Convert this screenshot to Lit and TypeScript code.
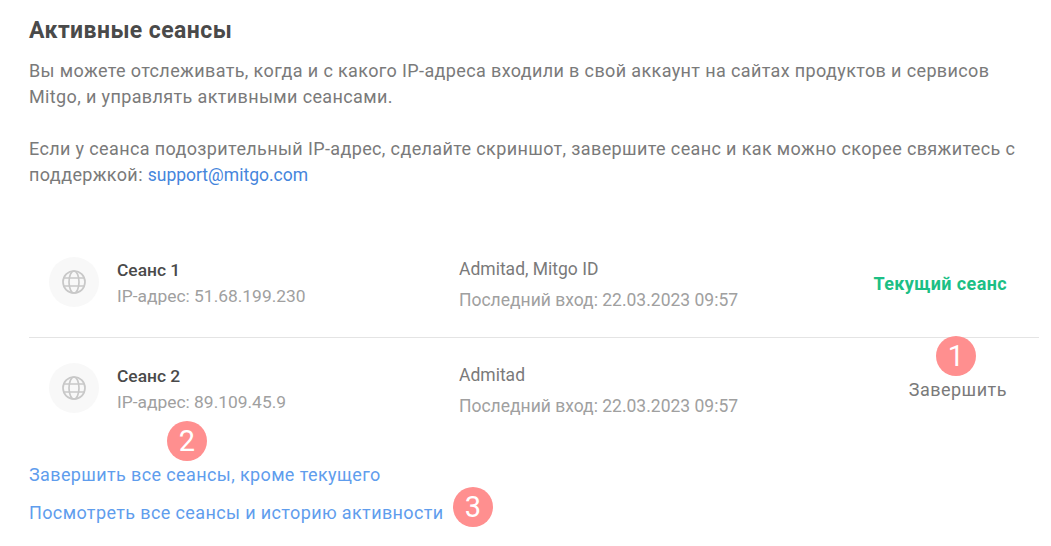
import { LitElement, css, html } from 'lit'
import { customElement } from 'lit/decorators.js'

interface Session {
  name: string
  ip: string
  services: string
  lastLogin: string
  current: boolean
}

const sessions: Session[] = [
  { name: 'Сеанс 1', ip: '51.68.199.230', services: 'Admitad, Mitgo ID', lastLogin: '22.03.2023 09:57', current: true },
  { name: 'Сеанс 2', ip: '89.109.45.9', services: 'Admitad', lastLogin: '22.03.2023 09:57', current: false },
]

const globe = html`
  <svg width="24" height="24" viewBox="0 0 24 24" fill="none" stroke="#c8c8c8" stroke-width="1.7">
    <circle cx="12" cy="12" r="11"></circle>
    <ellipse cx="12" cy="12" rx="5" ry="11"></ellipse>
    <path d="M2 8h20M2 16h20"></path>
  </svg>
`

@customElement('app-root')
export class AppRoot extends LitElement {
  static styles = css`
    :host {
      display: block;
      position: relative;
      width: 1051px;
      height: 546px;
      overflow: hidden;
      background: #fff;
      font-family: Roboto, sans-serif;
      color: #7a7a7a;
    }

    .page {
      padding: 16px 12px 0 29px;
    }

    h1 {
      margin: 0 0 12px;
      font-size: 23px;
      line-height: 30px;
      font-weight: 700;
      letter-spacing: 0.43px;
      color: #4a4a4a;
    }

    p {
      margin: 0 0 26px;
      font-size: 18px;
      line-height: 26px;
      letter-spacing: 0.37px;
    }

    p a {
      font-size: 17.5px;
      letter-spacing: 0;
      color: #4585dc;
      text-decoration: none;
    }

    .sessions {
      margin-top: 44px;
    }

    .row {
      display: flex;
      align-items: center;
      height: 105px;
      padding: 25px 0 30px 20px;
      box-sizing: border-box;
    }

    .row + .row {
      height: 106px;
      border-top: 1px solid #e4e4e4;
    }

    .avatar {
      display: flex;
      align-items: center;
      justify-content: center;
      flex: none;
      width: 50px;
      height: 50px;
      border-radius: 50%;
      background: #f8f8f8;
      margin-right: 18px;
    }

    .info {
      width: 342px;
      flex: none;
      margin-top: 2px;
    }

    .title {
      font-size: 17.4px;
      line-height: 26px;
      font-weight: 500;
      color: #4a4a4a;
    }

    .muted {
      font-size: 17.4px;
      line-height: 26px;
      color: #a0a0a0;
    }

    .services {
      flex: 1;
      margin-top: 5px;
    }

    .services .muted {
      font-size: 17.5px;
    }

    .services .name {
      font-size: 17.5px;
      line-height: 26px;
      color: #7a7a7a;
      margin-bottom: 5px;
    }

    .status {
      padding-right: 32px;
      margin-top: 2px;
      font-size: 18px;
      letter-spacing: 0.5px;
    }

    .current {
      color: #1cbf85;
      font-weight: 700;
      letter-spacing: 0.38px;
    }

    .links {
      display: flex;
      flex-direction: column;
      gap: 12px;
      align-items: flex-start;
      margin-top: 19px;
      font-size: 18px;
      line-height: 26px;
      letter-spacing: 0.38px;
    }

    .links a {
      color: #5f9ded;
      text-decoration: none;
    }

    .marker {
      position: absolute;
      display: flex;
      align-items: center;
      justify-content: center;
      width: 40px;
      height: 40px;
      border-radius: 50%;
      background: #ff8f8f;
      color: #fff;
      font-size: 29px;
    }
  `

  render() {
    return html`
      <div class="page">
        <h1>Активные сеансы</h1>
        <p>Вы можете отслеживать, когда и с какого IP-адреса входили в свой аккаунт на сайтах продуктов и сервисов Mitgo, и управлять активными сеансами.</p>
        <p>Если у сеанса подозрительный IP-адрес, сделайте скриншот, завершите сеанс и как можно скорее свяжитесь с поддержкой: <a href="#">support@mitgo.com</a></p>
        <div class="sessions">
          ${sessions.map(
            (s) => html`
              <div class="row">
                <div class="avatar">${globe}</div>
                <div class="info">
                  <div class="title">${s.name}</div>
                  <div class="muted">IP-адрес: ${s.ip}</div>
                </div>
                <div class="services">
                  <div class="name">${s.services}</div>
                  <div class="muted">Последний вход: ${s.lastLogin}</div>
                </div>
                <div class="status ${s.current ? 'current' : ''}">${s.current ? 'Текущий сеанс' : 'Завершить'}</div>
              </div>
            `
          )}
        </div>
        <div class="links">
          <a href="#">Завершить все сеансы, кроме текущего</a>
          <a href="#">Посмотреть все сеансы и историю активности</a>
        </div>
      </div>
      <div class="marker" style="left:936px;top:336px">1</div>
      <div class="marker" style="left:167px;top:421px">2</div>
      <div class="marker" style="left:453px;top:487px">3</div>
    `
  }
}
